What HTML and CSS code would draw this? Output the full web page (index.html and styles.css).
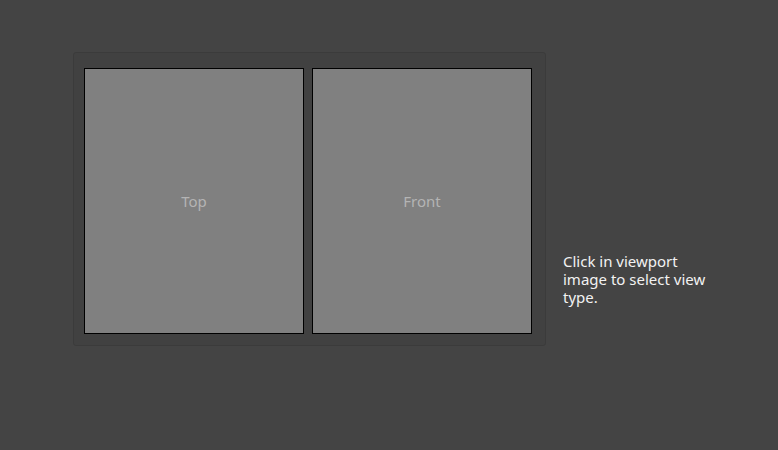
FILE: index.html
```html
<!DOCTYPE html>
<html>
<head>
<meta charset="utf-8">
<link rel="stylesheet" href="styles.css">
</head>
<body>
<div class="layout">
  <div class="panel">
    <div class="viewport"><span>Top</span></div>
    <div class="viewport"><span>Front</span></div>
  </div>
  <div class="caption">Click in viewport image to select view type.</div>
</div>
</body>
</html>
```
FILE: styles.css
```css
html, body {
  margin: 0;
  padding: 0;
  background: #444444;
  width: 778px;
  height: 450px;
  overflow: hidden;
}
.layout {
  display: flex;
  align-items: flex-start;
  padding: 52px 0 0 73px;
}
.panel {
  box-sizing: border-box;
  width: 473px;
  height: 294px;
  background: #414141;
  border: 1px solid #3b3b3b;
  border-radius: 3px;
  padding: 15px 12px 11px 10px;
  display: flex;
  gap: 8px;
}
.viewport {
  box-sizing: border-box;
  width: 220px;
  height: 266px;
  background: #808080;
  border: 1px solid #000;
  display: flex;
  align-items: center;
  justify-content: center;
  font-family: "Noto Sans", sans-serif;
  font-size: 15px;
  color: #b4b4b4;
}
.caption {
  margin: 200px 0 0 17px;
  width: 160px;
  font-family: "Noto Sans", sans-serif;
  font-size: 15px;
  line-height: 18px;
  color: #f2f2f2;
}
```
